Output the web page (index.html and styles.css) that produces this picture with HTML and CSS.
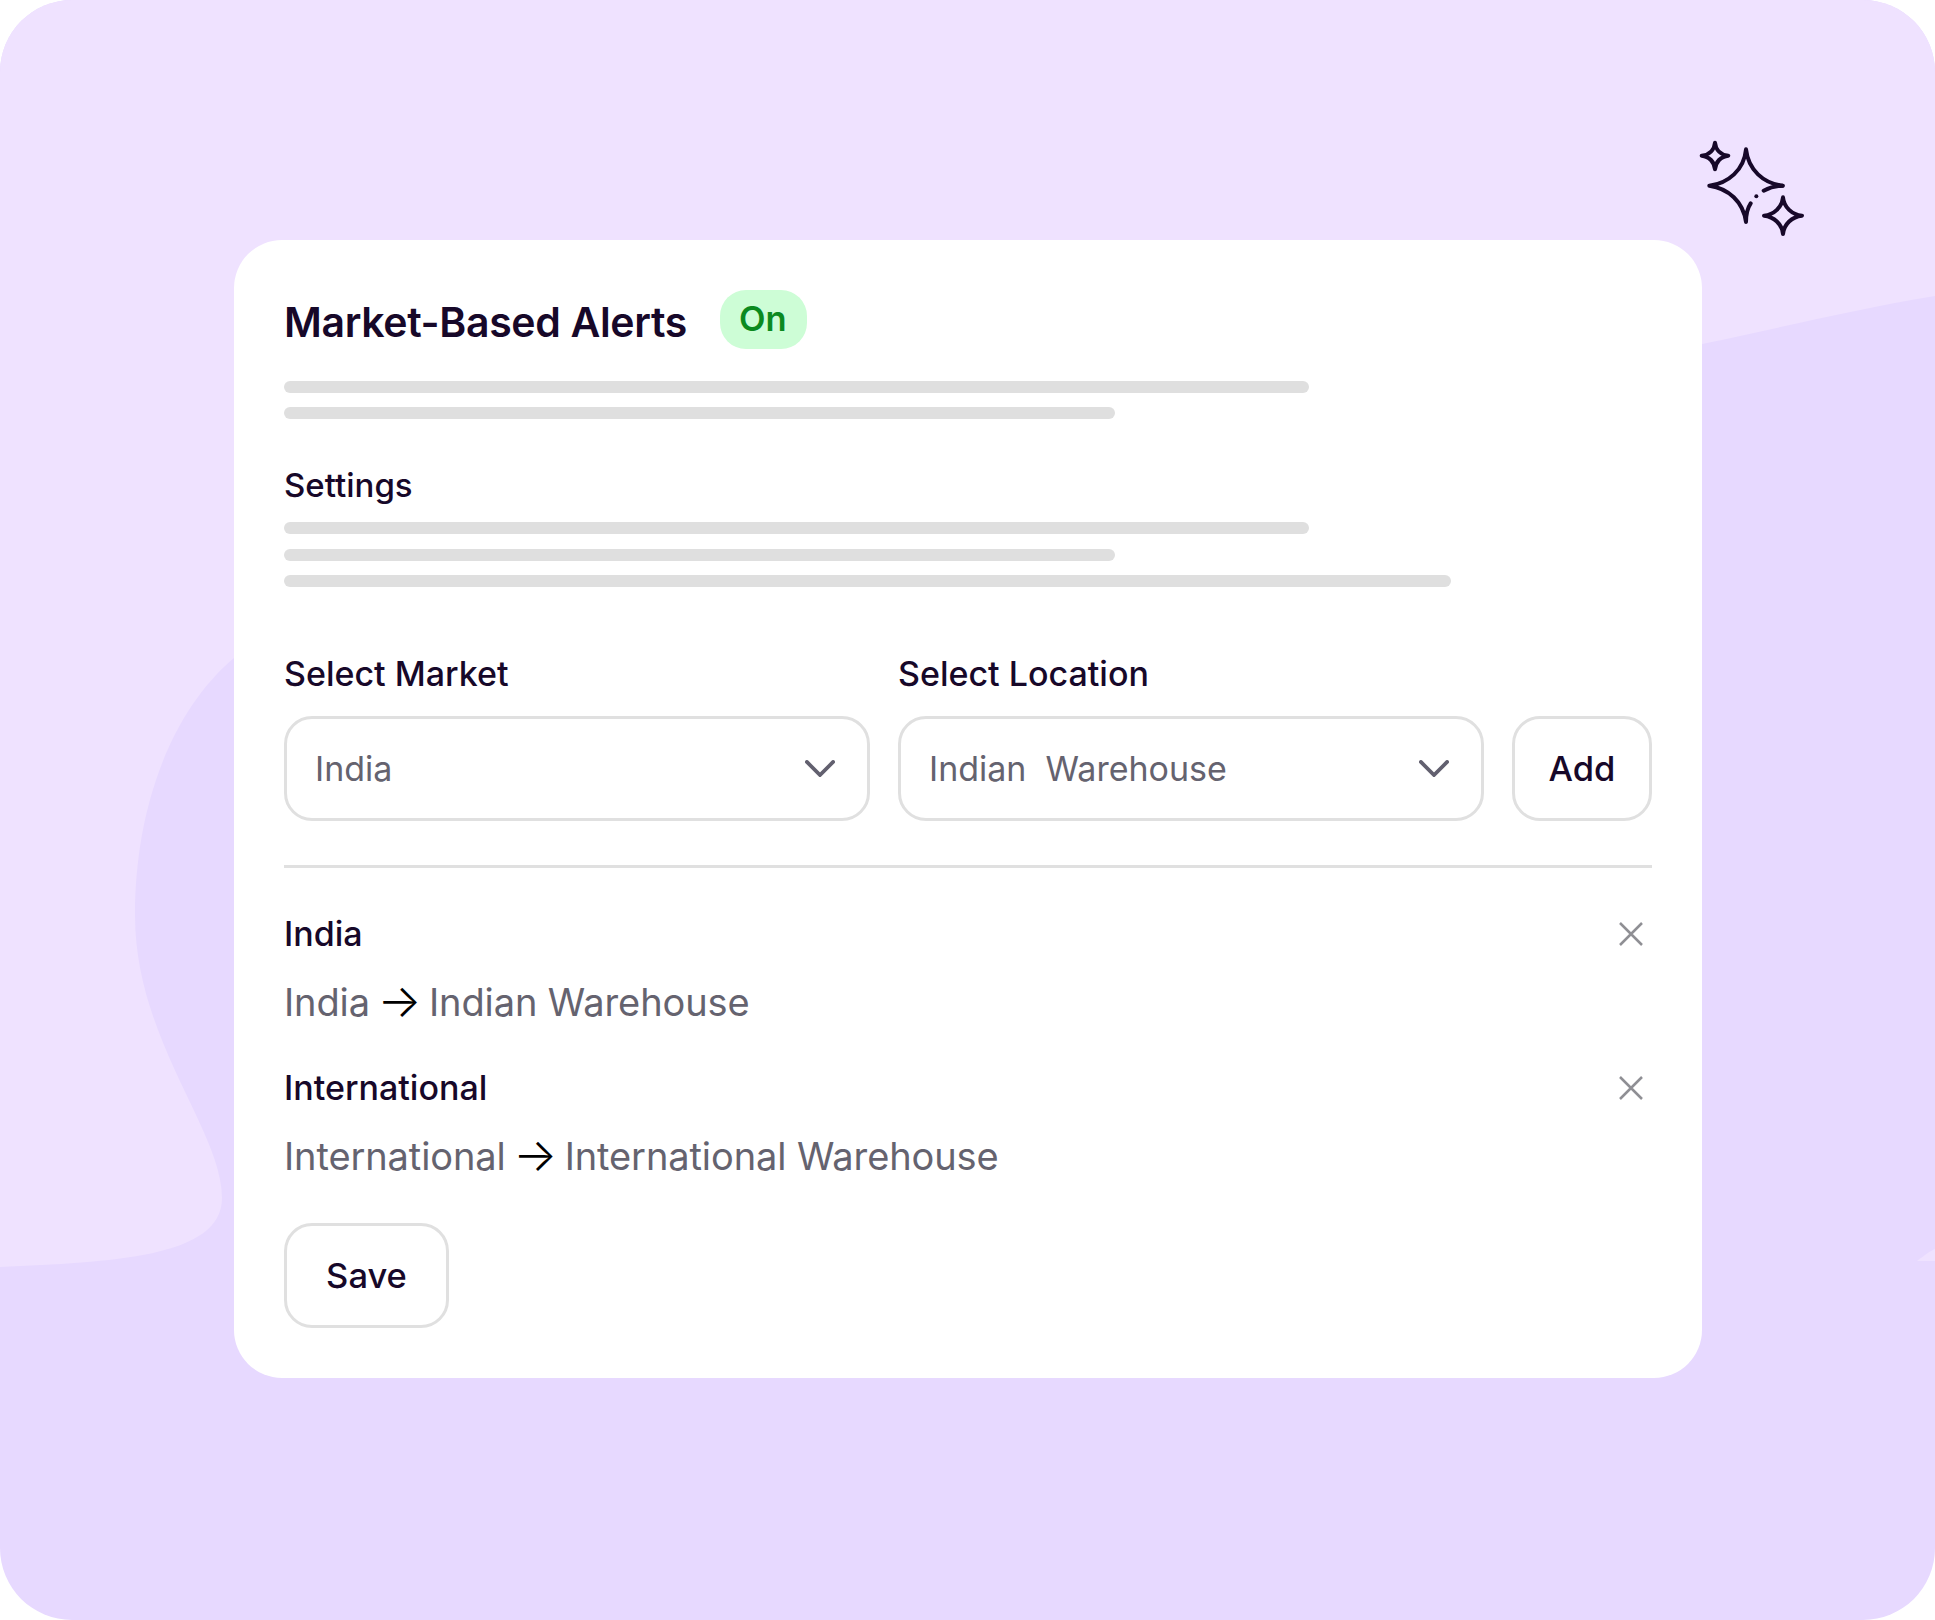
FILE: index.html
```html
<!DOCTYPE html>
<html lang="en">
<head>
    <meta charset="UTF-8">
    <title>Market-Based Alerts</title>
    <link rel="stylesheet" href="styles.css">
</head>
<body>
    <div class="stage">
        <svg class="backdrop" viewBox="0 0 1935 1620" aria-hidden="true">
            <path class="backdrop-light" d="M0 0H1935V296C1850 310 1780 328 1702 344L1702 640L234 640V658C170 712 135 810 135 915C135 1040 222 1130 222 1198C222 1258 110 1262 0 1267Z" />
            <path class="backdrop-light" d="M1917 1261C1925 1255 1930 1251 1935 1249V1261Z" />
        </svg>
        <svg class="sparkles" viewBox="0 0 480 390" aria-hidden="true">
            <path d="M368 197C310 190 265 150 258 88C252 150 205 190 148 197C205 205 250 245 258 306C258 285 262 265 272 250" />
            <path d="M311 212C328 203 345 198 368 197" />
            <circle cx="289" cy="229" r="6" />
            <path d="M165 68C167 90 182 105 205 107C182 109 167 126 165 148C163 126 148 109 125 107C148 105 163 90 165 68Z" />
            <path d="M369 232C372 262 396 284 426 287C396 290 372 312 369 342C366 312 342 290 312 287C342 284 366 262 369 232Z" />
        </svg>

        <main class="card">
            <header class="card-head">
                <h1>Market-Based Alerts</h1>
                <span class="badge">On</span>
            </header>
            <div class="lines lines-top">
                <div class="line line-a"></div>
                <div class="line line-b"></div>
            </div>

            <h2 class="settings-title">Settings</h2>
            <div class="lines">
                <div class="line line-a"></div>
                <div class="line line-b"></div>
                <div class="line line-c"></div>
            </div>

            <div class="picker">
                <div class="field">
                    <label>Select Market</label>
                    <div class="select">
                        <span>India</span>
                        <svg class="chevron" viewBox="0 0 32 18"><path d="M2 2L16 16L30 2" /></svg>
                    </div>
                </div>
                <div class="field">
                    <label>Select Location</label>
                    <div class="select">
                        <span>Indian&nbsp; Warehouse</span>
                        <svg class="chevron" viewBox="0 0 32 18"><path d="M2 2L16 16L30 2" /></svg>
                    </div>
                </div>
                <button class="btn btn-add" type="button">Add</button>
            </div>

            <hr class="divider">

            <section class="entry">
                <div class="entry-head">
                    <h3>India</h3>
                    <svg class="close" viewBox="0 0 26 26"><path d="M2 2L24 24M24 2L2 24" /></svg>
                </div>
                <p>India <span class="arrow">→</span> Indian Warehouse</p>
            </section>
            <section class="entry">
                <div class="entry-head">
                    <h3>International</h3>
                    <svg class="close" viewBox="0 0 26 26"><path d="M2 2L24 24M24 2L2 24" /></svg>
                </div>
                <p>International <span class="arrow">→</span> International Warehouse</p>
            </section>

            <button class="btn btn-save" type="button">Save</button>
        </main>
    </div>
</body>
</html>
```

FILE: styles.css
```css
/* Alerts settings card on a lilac panel */
body {
    margin: 0;
    background: #ffffff;
    font-family: Inter, "Liberation Sans", sans-serif;
    color: #170829;
}
.stage {
    position: relative;
    width: 1935px;
    height: 1620px;
    padding: 240px 233px 0 234px;
    box-sizing: border-box;
    background: #e7d9ff;
    border-radius: 72px;
    overflow: hidden;
}
.backdrop {
    position: absolute;
    left: 0;
    top: 0;
    width: 1935px;
    height: 1620px;
}
.backdrop-light {
    fill: #efe2ff;
}
.sparkles {
    position: absolute;
    left: 1660px;
    top: 120px;
    width: 160px;
    height: 130px;
    fill: none;
    stroke: #170829;
    stroke-width: 12;
    stroke-linecap: round;
    stroke-linejoin: round;
}
.sparkles circle {
    fill: #170829;
    stroke: none;
}
.card {
    position: relative;
    height: 1138px;
    padding: 50px;
    box-sizing: border-box;
    background: #ffffff;
    border-radius: 48px;
}
.card-head {
    display: flex;
    align-items: center;
    gap: 33.5px;
    height: 59px;
}
.card-head h1 {
    margin: 0;
    padding-top: 5px;
    font-size: 41px;
    font-weight: 600;
    letter-spacing: -0.35px;
}
.badge {
    display: flex;
    align-items: center;
    justify-content: center;
    width: 87px;
    height: 59px;
    padding: 0 2px 2px 0;
    box-sizing: border-box;
    border-radius: 26px;
    background: #cdfdd6;
    color: #0b8a1f;
    font-size: 34.5px;
    font-weight: 600;
}
.lines {
    display: flex;
    flex-direction: column;
    gap: 14.5px;
    margin-top: 15.5px;
}
.lines-top {
    gap: 14px;
    margin-top: 32px;
}
.line {
    height: 12px;
    border-radius: 6px;
    background: #dfdfdf;
}
.line-a {
    width: 1025px;
}
.line-b {
    width: 831px;
}
.line-c {
    width: 1167px;
}
.settings-title {
    margin: 43.5px 0 0;
    font-size: 33px;
    line-height: 44px;
    font-weight: 500;
}
.picker {
    display: flex;
    align-items: flex-end;
    gap: 28.5px;
    margin-top: 65px;
}
.field {
    display: flex;
    flex-direction: column;
    gap: 20px;
    width: 585.5px;
}
.field label {
    font-size: 34px;
    line-height: 44px;
    font-weight: 500;
}
.select {
    display: flex;
    align-items: center;
    justify-content: space-between;
    height: 105px;
    padding: 0 31.5px 0 28px;
    box-sizing: border-box;
    border: 3px solid #e0e0e0;
    border-radius: 28px;
    font-size: 34px;
    color: #65636f;
}
.chevron {
    width: 30px;
    height: 17px;
    fill: none;
    stroke: #62606f;
    stroke-width: 4;
    stroke-linecap: round;
}
.btn {
    height: 105px;
    padding: 0;
    box-sizing: border-box;
    background: #ffffff;
    border: 3px solid #e0e0e0;
    border-radius: 28px;
    font-family: inherit;
    font-size: 34.5px;
    font-weight: 500;
    color: #170829;
}
.btn-add {
    flex: 1;
}
.btn-save {
    display: block;
    width: 165px;
    margin-top: 44px;
}
.divider {
    height: 3px;
    margin: 44px 0;
    border: 0;
    background: #e0e0e0;
}
.entry-head {
    display: flex;
    align-items: center;
    justify-content: space-between;
    margin-top: 40.5px;
    padding-right: 8px;
}
.entry-head h3 {
    margin: 0;
    font-size: 34px;
    line-height: 44px;
    font-weight: 500;
}
.close {
    width: 26px;
    height: 26px;
    fill: none;
    stroke: #8f8f94;
    stroke-width: 2.5;
}
.entry p {
    margin: 23px 0 0;
    font-size: 38px;
    line-height: 46px;
    letter-spacing: -0.1px;
    color: #65636f;
}
.arrow {
    margin: 0 -3px;
    font-size: 46px;
    font-weight: 300;
    line-height: 0;
    vertical-align: -1px;
    color: #000000;
}
```
